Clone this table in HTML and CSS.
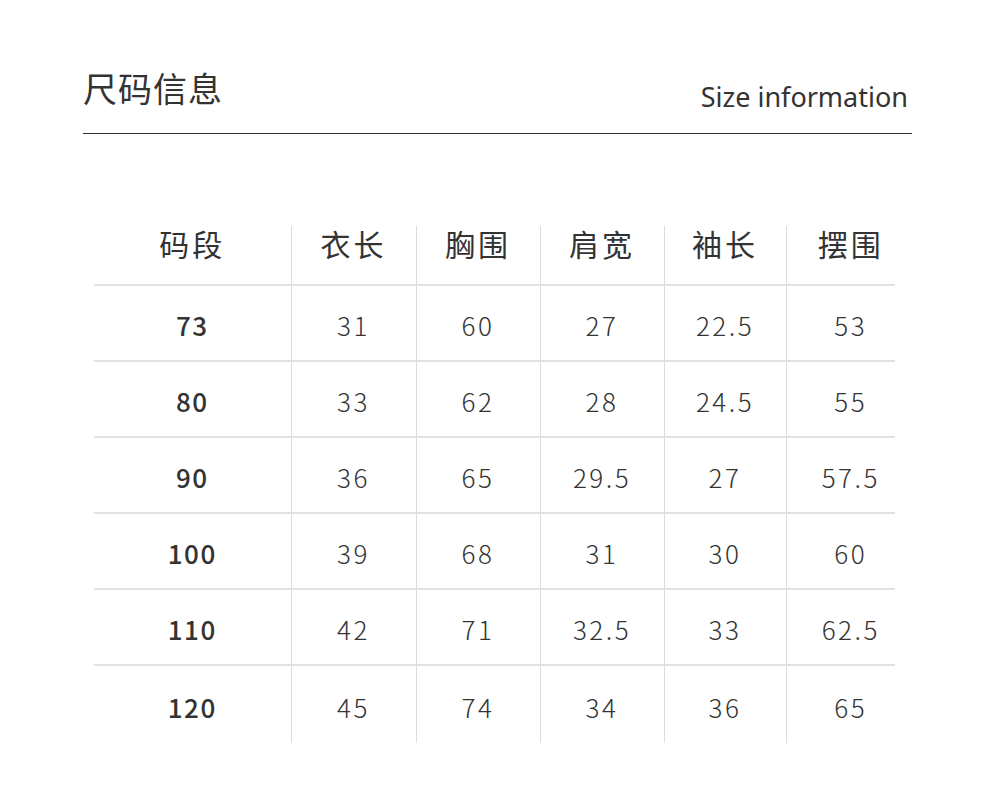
FILE: index.html
```html
<!DOCTYPE html>
<html lang="zh">
<head>
<meta charset="utf-8">
<link rel="stylesheet" href="styles.css">
</head>
<body>
<div class="page">
  <div class="head">
    <h1 class="title">尺码信息</h1>
    <div class="sub">Size information</div>
  </div>
  <table class="sizes">
    <colgroup>
      <col class="c1"><col class="c2"><col class="c3"><col class="c4"><col class="c5"><col class="c6">
    </colgroup>
    <thead>
      <tr><th>码段</th><th>衣长</th><th>胸围</th><th>肩宽</th><th>袖长</th><th>摆围</th></tr>
    </thead>
    <tbody>
      <tr><td class="sz">73</td><td>31</td><td>60</td><td>27</td><td>22.5</td><td>53</td></tr>
      <tr><td class="sz">80</td><td>33</td><td>62</td><td>28</td><td>24.5</td><td>55</td></tr>
      <tr><td class="sz">90</td><td>36</td><td>65</td><td>29.5</td><td>27</td><td>57.5</td></tr>
      <tr><td class="sz">100</td><td>39</td><td>68</td><td>31</td><td>30</td><td>60</td></tr>
      <tr><td class="sz">110</td><td>42</td><td>71</td><td>32.5</td><td>33</td><td>62.5</td></tr>
      <tr><td class="sz">120</td><td>45</td><td>74</td><td>34</td><td>36</td><td>65</td></tr>
    </tbody>
  </table>
</div>
</body>
</html>
```
FILE: styles.css
```css
html, body {
  margin: 0;
  padding: 0;
  background: #fff;
}
body {
  font-family: "Noto Sans CJK SC", "Noto Sans", sans-serif;
  color: #333;
}
.page {
  width: 1000px;
  height: 808px;
  padding-top: 64px;
  box-sizing: border-box;
}
.head {
  margin-left: 83px;
  width: 829px;
  display: flex;
  justify-content: space-between;
  align-items: flex-end;
  border-bottom: 1px solid #333;
  height: 70px;
  box-sizing: border-box;
  padding-bottom: 22px;
}
.title {
  margin: 0;
  font-size: 34px;
  font-weight: 400;
  line-height: 40px;
  letter-spacing: 1px;
  position: relative;
  top: -3px;
}
.sub {
  font-family: "Noto Sans", sans-serif;
  font-size: 27px;
  line-height: 30px;
  margin-right: 4px;
  color: #333;
  position: relative;
  top: 1px;
}
.sizes {
  margin-top: 92px;
  margin-left: 94px;
  width: 801px;
  border-collapse: collapse;
  table-layout: fixed;
}
.c1 { width: 197px; }
.c2 { width: 125px; }
.c3 { width: 124px; }
.c4 { width: 124px; }
.c5 { width: 122px; }
.c6 { width: 109px; }
.sizes th, .sizes td {
  text-align: center;
  padding: 0;
  border-left: 1px solid #dcdcdc;
}
.sizes th:first-child, .sizes td:first-child {
  border-left: none;
}
.sizes th:last-child, .sizes td:last-child {
  padding-left: 20px;
}
.sizes th {
  height: 58px;
  font-size: 30px;
  font-weight: 400;
  letter-spacing: 3px;
  vertical-align: top;
  line-height: 34px;
  border-bottom: 2px solid #e2e2e2;
}
.sizes td {
  height: 71px;
  padding-top: 3px;
  font-size: 26px;
  font-weight: 300;
  letter-spacing: 2.5px;
  border-bottom: 2px solid #e2e2e2;
}
.sizes tbody tr:last-child td {
  border-bottom: none;
  height: 74px;
}
.sizes td.sz {
  font-weight: 500;
  letter-spacing: 1.5px;
}
```
